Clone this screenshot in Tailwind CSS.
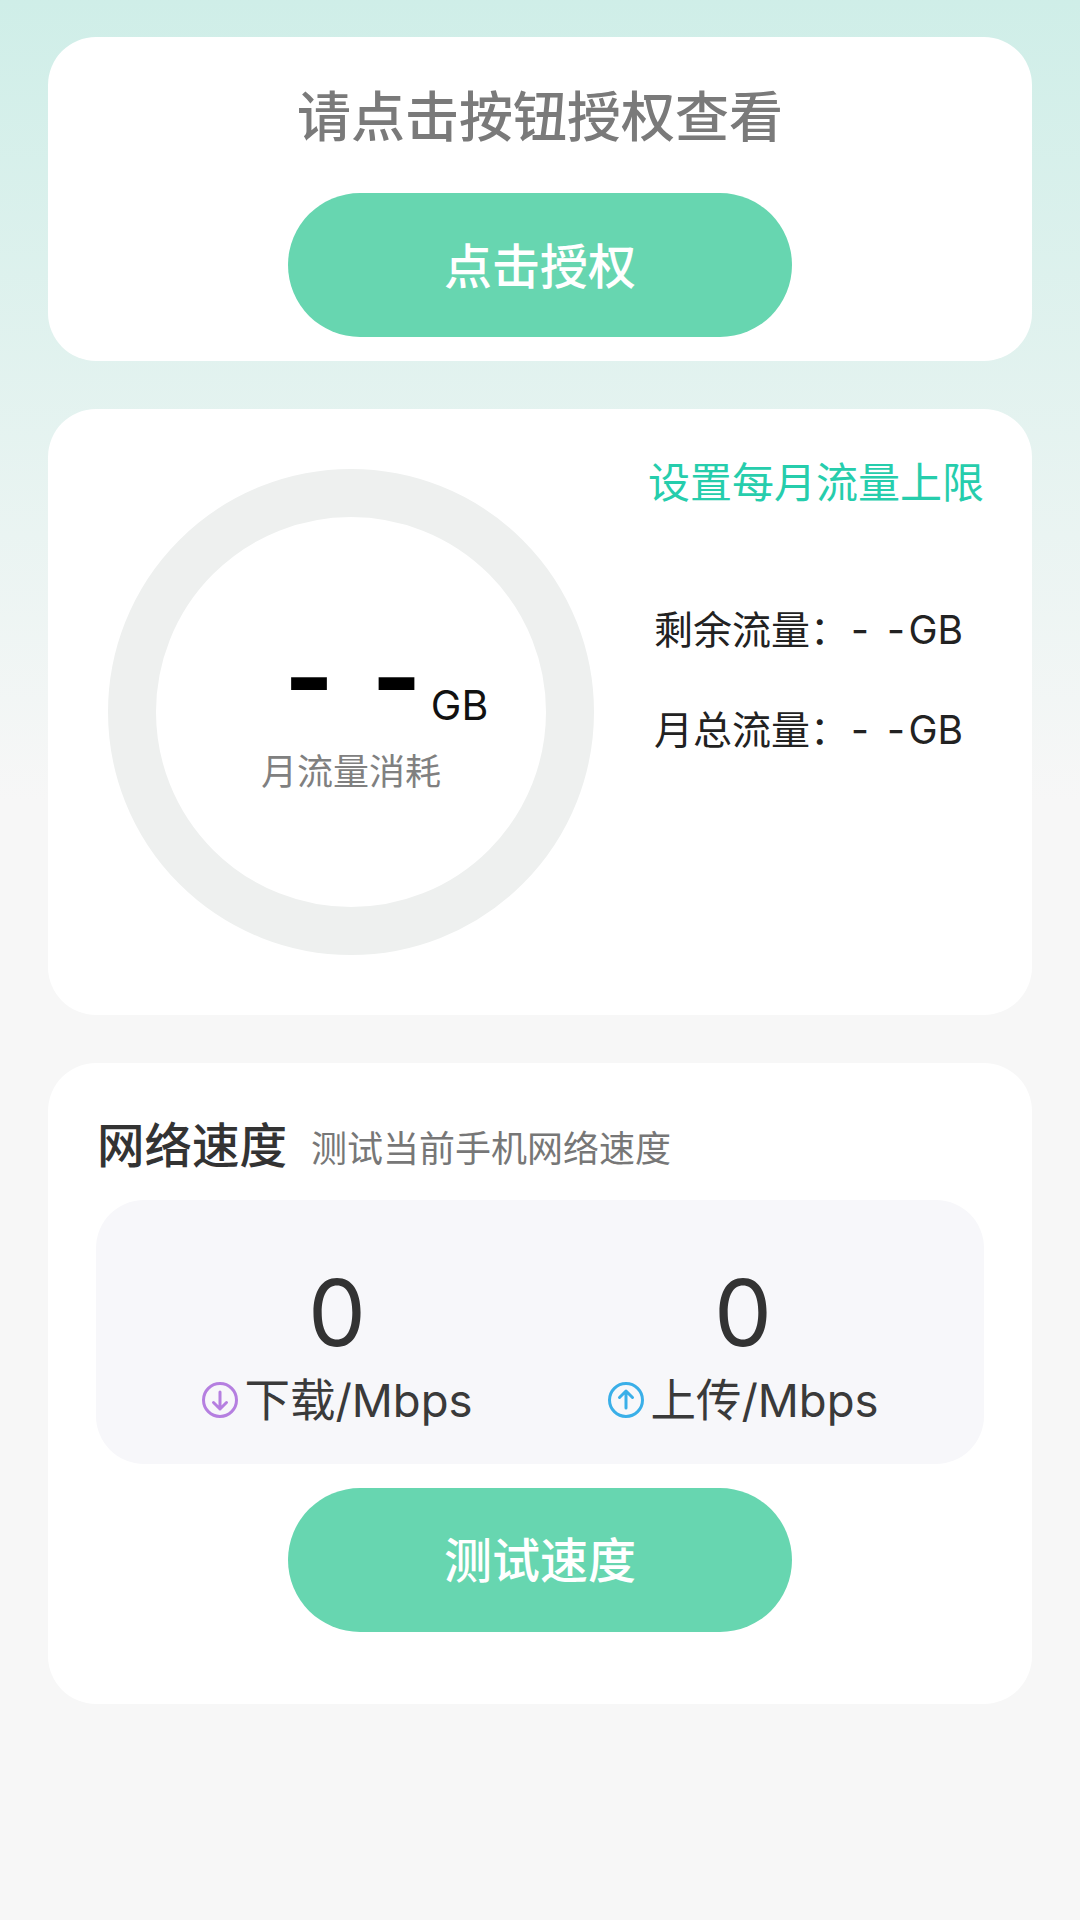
<!DOCTYPE html>
<html lang="zh-CN">
  <head>
    <meta charset="UTF-8" />
    <meta name="viewport" content="width=device-width, initial-scale=1.0" />
    <title>流量</title>
    <script src="https://cdn.jsdelivr.net/npm/@tailwindcss/browser@4"></script>
  </head>

  <body class="w-[1080px] h-[1920px] overflow-hidden bg-[#f7f7f7] bg-gradient-to-b from-[#cfeee8] to-[#f7f7f7] bg-[length:100%_800px] bg-no-repeat font-['Inter','Noto_Sans_CJK_SC',sans-serif]">
    <div class="flex flex-col gap-[48px] px-[48px] pt-[37px]">
      <!-- auth card -->
      <section class="h-[324px] bg-white rounded-[48px] flex flex-col items-center">
        <h2 class="mt-[49px] h-[64px] leading-[64px] text-[54px] font-medium text-[#7a7a7a]">请点击按钮授权查看</h2>
        <button class="mt-[43px] w-[504px] h-[144px] pt-[3px] rounded-full bg-[#67d6b0] text-white text-[48px] font-medium">点击授权</button>
      </section>

      <!-- monthly usage -->
      <section class="h-[606px] bg-white rounded-[48px] flex pl-[60px] pt-[60px]">
        <div class="w-[486px] h-[486px] rounded-full border-[48px] border-[#eef0ef] flex flex-col items-center pt-[124px] shrink-0">
          <div class="flex h-[88px] ml-[70px]">
            <span class="text-[108px] leading-[72px] font-bold text-black">-</span>
            <span class="ml-[37px] text-[108px] leading-[72px] font-bold text-black">-</span>
            <span class="self-end ml-[9px] text-[41px] leading-[48px] text-[#111]">GB</span>
          </div>
          <p class="mt-[18px] text-[36px] leading-[50px] text-[#808080]">月流量消耗</p>
        </div>
        <div class="ml-[54px] flex flex-col">
          <a class="-mt-[16px] text-[42px] leading-[60px] text-[#26cdac]">设置每月流量上限</a>
          <p class="mt-[87px] ml-[6px] text-[39px] leading-[60px] text-[#222]">剩余流量：<span class="ml-[2px] tracking-[3.5px]">- -</span>GB</p>
          <p class="mt-[40px] ml-[6px] text-[39px] leading-[60px] text-[#222]">月总流量：<span class="ml-[2px] tracking-[3.5px]">- -</span>GB</p>
        </div>
      </section>

      <!-- speed test -->
      <section class="h-[641px] bg-white rounded-[48px] px-[48px] flex flex-col items-center">
        <div class="self-start mt-[48px] h-[70px] flex items-center pl-[1px]">
          <h2 class="text-[47.5px] font-medium text-[#333]">网络速度</h2>
          <span class="ml-[24px] mt-[5px] text-[36px] text-[#777]">测试当前手机网络速度</span>
        </div>
        <div class="mt-[19px] w-full h-[264px] bg-[#f7f7fa] rounded-[48px] flex justify-center pt-[58px]">
          <div class="w-[406px] flex flex-col items-center">
            <span class="text-[92px] leading-[110px] text-[#333]">0</span>
            <div class="flex items-center h-[50px] mt-[8px]">
              <svg class="w-[38px] h-[38px] mr-[5px] -mt-[2px]" viewBox="0 0 38 38" fill="none" stroke="#b57fe0" stroke-width="3" stroke-linecap="round" stroke-linejoin="round">
                <circle cx="19" cy="19" r="16.5" />
                <path d="M19 11v17M12.5 21.5l6.5 6.5 6.5-6.5" />
              </svg>
              <span class="text-[45.5px] text-[#3a3a3a]">下载/Mbps</span>
            </div>
          </div>
          <div class="w-[406px] flex flex-col items-center">
            <span class="text-[92px] leading-[110px] text-[#333]">0</span>
            <div class="flex items-center h-[50px] mt-[8px]">
              <svg class="w-[38px] h-[38px] mr-[5px] -mt-[2px]" viewBox="0 0 38 38" fill="none" stroke="#3aafe8" stroke-width="3" stroke-linecap="round" stroke-linejoin="round">
                <circle cx="19" cy="19" r="16.5" />
                <path d="M19 27v-17M12.5 16.5l6.5-6.5 6.5 6.5" />
              </svg>
              <span class="text-[45.5px] text-[#3a3a3a]">上传/Mbps</span>
            </div>
          </div>
        </div>
        <button class="mt-[24px] w-[504px] h-[144px] pt-[2px] rounded-full bg-[#67d6b0] text-white text-[48px] font-medium">测试速度</button>
      </section>
    </div>
  </body>
</html>
